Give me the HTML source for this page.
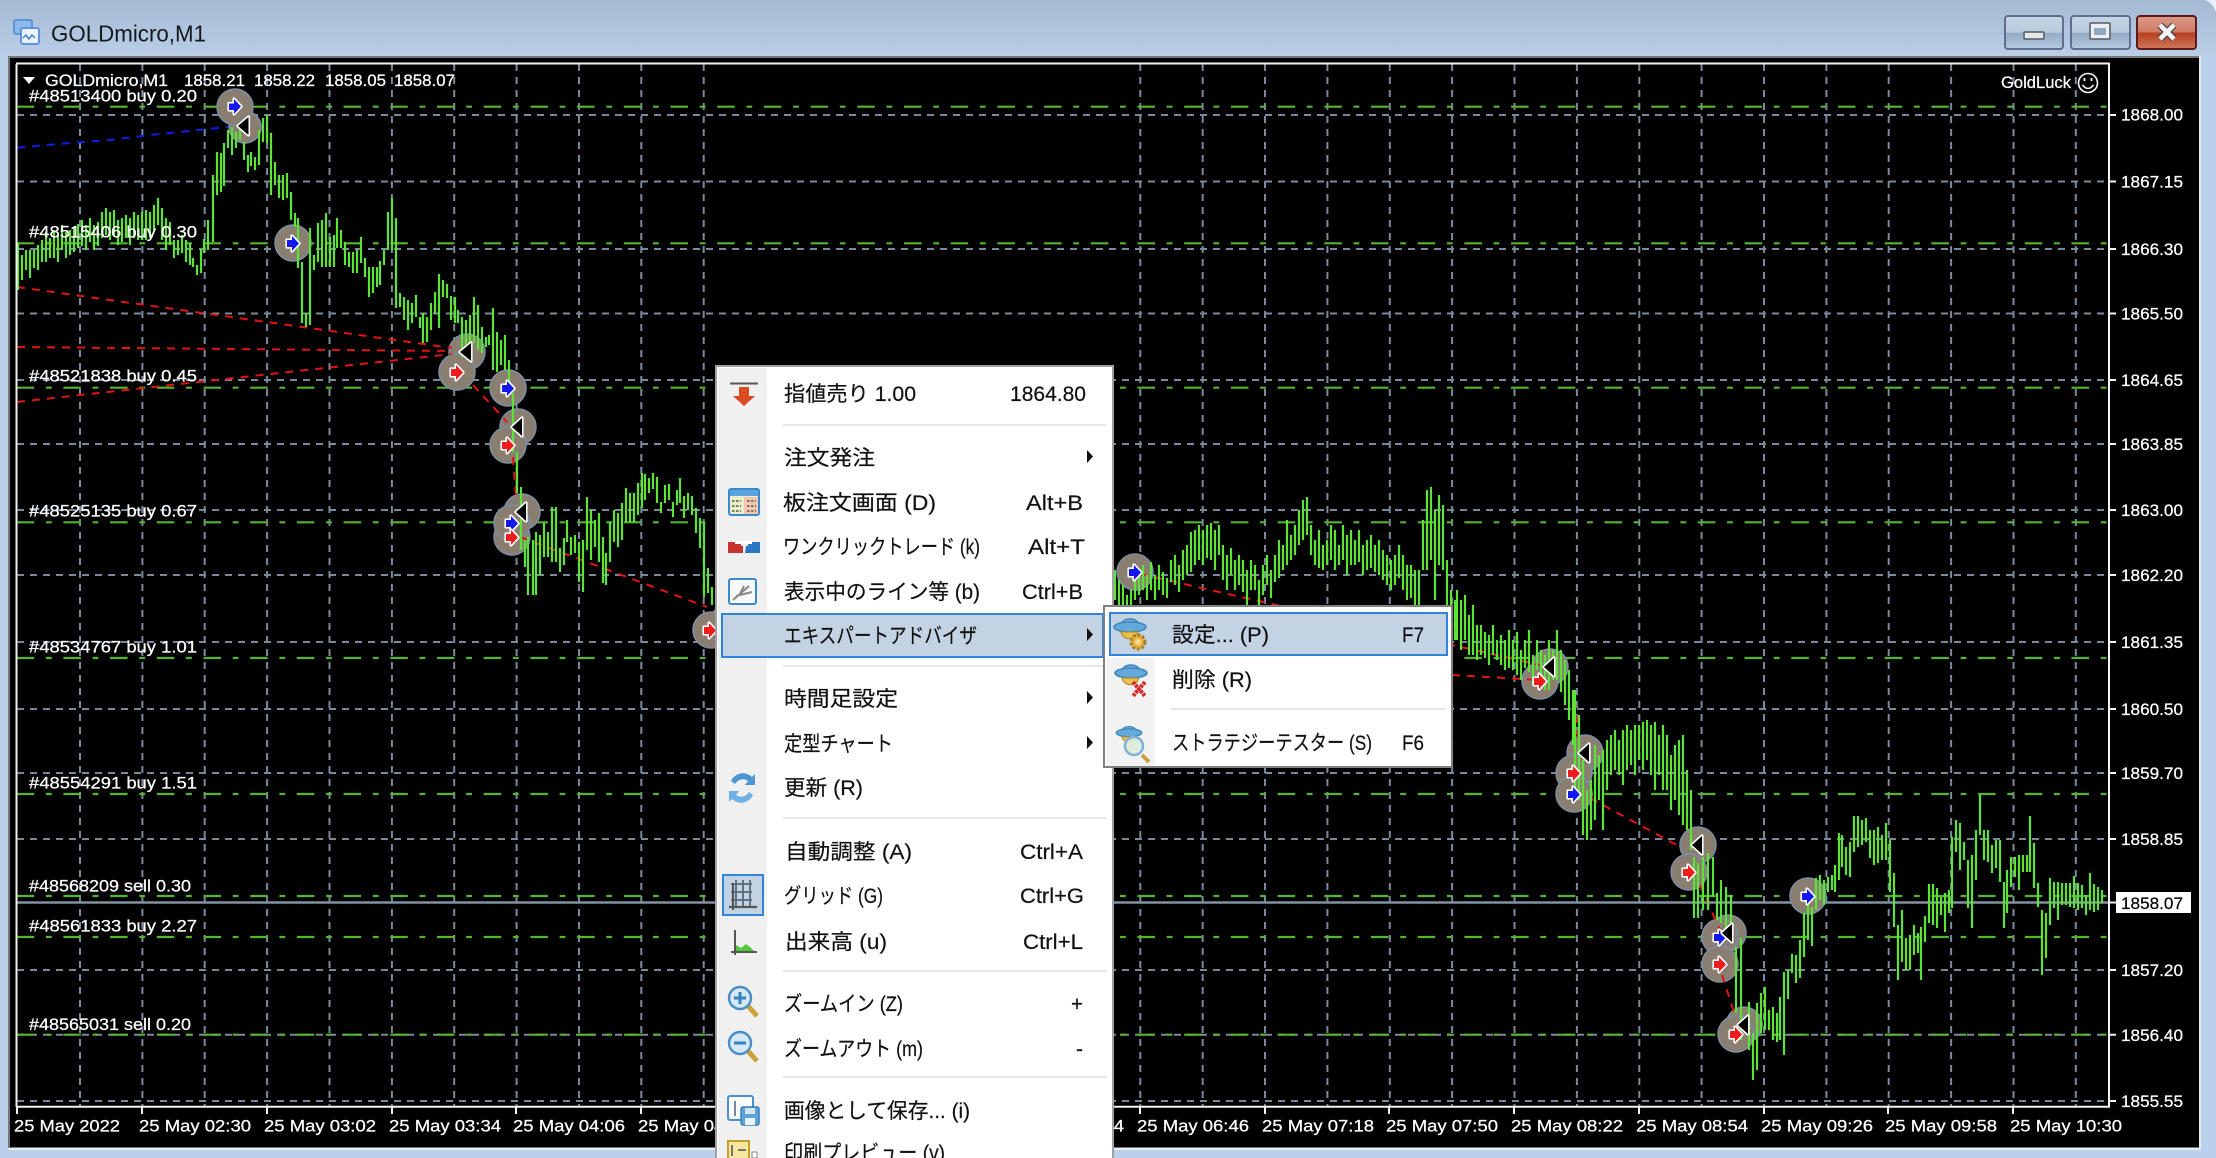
<!DOCTYPE html>
<html lang="ja">
<head>
<meta charset="utf-8">
<title>GOLDmicro,M1</title>
<style>
html,body{margin:0;padding:0;width:2216px;height:1158px;overflow:hidden;background:#b9d1ea}
svg{display:block;filter:blur(.3px)}
text{font-family:"Liberation Sans","Noto Sans CJK JP",sans-serif}
.w{fill:#fff;font-size:17px;stroke:#fff;stroke-width:.25px}
.m{fill:#111;font-size:21px;stroke:#111;stroke-width:.2px}
</style>
</head>
<body>
<svg width="2216" height="1158" viewBox="0 0 2216 1158" xmlns="http://www.w3.org/2000/svg">
<defs>
<linearGradient id="tb" x1="0" y1="0" x2="0" y2="1"><stop offset="0" stop-color="#a6bad2"/><stop offset="1" stop-color="#b9cfe7"/></linearGradient>
<linearGradient id="btn" x1="0" y1="0" x2="0" y2="1"><stop offset="0" stop-color="#c5d5e6"/><stop offset=".5" stop-color="#b8cadd"/><stop offset=".52" stop-color="#93abc5"/><stop offset="1" stop-color="#b5cbe0"/></linearGradient>
<linearGradient id="cls" x1="0" y1="0" x2="0" y2="1"><stop offset="0" stop-color="#dc9a8a"/><stop offset=".48" stop-color="#cf7a66"/><stop offset=".52" stop-color="#b83f22"/><stop offset="1" stop-color="#cf7a5a"/></linearGradient>
<g id="hat"><path d="M-9 -1C-8-9 8-9 9-1Z" fill="#6fb2df" stroke="#3f86bb" stroke-width="1.4"/><ellipse cx="0" cy="1" rx="16" ry="5" fill="#63a9d9" stroke="#3f86bb" stroke-width="1.6"/><path d="M-9 6C-7 15 6 15 8 6Z" fill="#e9c04c" stroke="#a98a2c"/></g>
</defs>

<!-- window chrome -->
<rect width="2216" height="1158" fill="#b9d1ea"/>
<rect width="2216" height="56" fill="url(#tb)"/>
<path d="M2205 0H2216V12Q2212 2 2205 0Z" fill="#e8f0f8"/>
<rect x="14" y="20" width="18" height="14" rx="2" fill="#8db8ec" stroke="#5f95d8" stroke-width="2"/>
<rect x="21" y="28" width="18" height="16" rx="2" fill="#eaf3fd" stroke="#5f95d8" stroke-width="2"/>
<path d="M23 38l3-3 3 4 3-4 3 3" fill="none" stroke="#4a7fc0" stroke-width="1.5"/>
<text x="51" y="41.7" font-size="23" fill="#15181c" textLength="155" lengthAdjust="spacingAndGlyphs">GOLDmicro,M1</text>

<rect x="2005" y="16" width="58" height="33" rx="3" fill="url(#btn)" stroke="#5d6f8c" stroke-width="2"/>
<rect x="2024" y="32" width="20" height="7" rx="1" fill="#e6e6e6" stroke="#4f5a68" stroke-width="1.5"/>
<rect x="2071" y="16" width="59" height="33" rx="3" fill="url(#btn)" stroke="#5d6f8c" stroke-width="2"/>
<rect x="2090" y="23" width="20" height="16" rx="1" fill="#eeeeee" stroke="#4f5a68" stroke-width="1.5"/>
<rect x="2094" y="28" width="12" height="7" fill="#8fa9c4"/>
<rect x="2137" y="16" width="59" height="33" rx="3" fill="url(#cls)" stroke="#5c1a1a" stroke-width="2"/>
<path d="M2160 25L2174 39M2174 25L2160 39" stroke="#4a4a4a" stroke-width="7"/>
<path d="M2160 25L2174 39M2174 25L2160 39" stroke="#f4f4f4" stroke-width="4.5"/>

<!-- chart frame -->
<rect x="8" y="56" width="2193" height="94" fill="#6a6a6a"/>
<rect x="8" y="56" width="2193" height="1094" fill="#e8ecef"/>
<rect x="8" y="56" width="2191" height="1092" fill="#777"/>
<rect x="10" y="58" width="2189" height="1089" fill="#000"/>

<!-- grid -->
<path fill="none" stroke="#7a8a9c" stroke-width="2" stroke-dasharray="7 6" d="M17 115H2109M17 181.5H2109M17 249H2109M17 313.5H2109M17 380H2109M17 444H2109M17 510H2109M17 575H2109M17 642H2109M17 709H2109M17 773H2109M17 839H2109M17 970H2109M17 1034.7H2109M17 1101H2109"/>
<path fill="none" stroke="#7a8a9c" stroke-width="2" stroke-dasharray="7 6" d="M80 64V1106M142.4 64V1106M204.7 64V1106M267.1 64V1106M329.5 64V1106M391.9 64V1106M454.2 64V1106M516.6 64V1106M579 64V1106M641.3 64V1106M703.7 64V1106M1140.3 64V1106M1202.7 64V1106M1265 64V1106M1327.4 64V1106M1389.8 64V1106M1452.1 64V1106M1514.5 64V1106M1576.9 64V1106M1639.3 64V1106M1701.6 64V1106M1764 64V1106M1826.4 64V1106M1888.7 64V1106M1951.1 64V1106M2013.5 64V1106M2075.8 64V1106"/>
<!-- order lines -->
<path fill="none" stroke="#55b62e" stroke-width="2.2" stroke-dasharray="17.5 11.7 5.8 11.7" d="M16.7 106.7H2109M16.7 243.3H2109M16.7 387.7H2109M16.7 522.3H2109M16.7 658H2109M16.7 794H2109M16.7 896H2109M16.7 937H2109M16.7 1034.7H2109"/>
<!-- bid -->
<path d="M17 902.5H2109" stroke="#8291a2" stroke-width="2.4"/>

<!-- marker discs -->
<g fill="#8a7e70" stroke="#7a8fa6" stroke-width="1.5">
<circle cx="245" cy="127" r="16"/><circle cx="235" cy="107" r="18"/><circle cx="293" cy="243" r="18"/>
<circle cx="467" cy="352" r="18"/><circle cx="457" cy="372" r="18"/><circle cx="508" cy="388" r="18"/>
<circle cx="518" cy="427" r="18"/><circle cx="508" cy="445" r="18"/><circle cx="522" cy="512" r="18"/><circle cx="512" cy="537" r="18"/><circle cx="512" cy="523" r="18"/>
<circle cx="730" cy="620" r="18"/><circle cx="711" cy="630" r="18"/>
<circle cx="1135" cy="572" r="18"/><circle cx="1550" cy="667" r="18"/><circle cx="1540" cy="681" r="18"/>
<circle cx="1585" cy="753" r="18"/><circle cx="1574" cy="773" r="18"/><circle cx="1574" cy="794" r="18"/>
<circle cx="1698" cy="845" r="18"/><circle cx="1689" cy="872" r="18"/><circle cx="1808" cy="896" r="18"/>
<circle cx="1728" cy="933" r="18"/><circle cx="1720" cy="937" r="18"/><circle cx="1720" cy="964" r="18"/>
<circle cx="1744" cy="1025" r="18"/><circle cx="1736" cy="1034" r="18"/>
</g>

<!-- trade lines -->
<path fill="none" stroke="#0a20e6" stroke-width="2" stroke-dasharray="8 7" d="M17 147.7L70 143L110 140L150 135L228 127"/>
<path fill="none" stroke="#e01414" stroke-width="2" stroke-dasharray="8 7" d="M17 287L452 348M17 347L452 351M17 402L452 354M473 385L507 422M513 457L516 497M520 537L707 607M1140 574L1540 665M1452 675L1540 680M1575 700L1578 740M1590 798L1682 848M1700 885L1720 930M1722 975L1735 1015"/>

<!-- price bars -->
<path fill="none" stroke="#5de238" stroke-width="2.2" d="M18 243V290M22 255V280M26 250V270M30 250V278M34 250V268M38 245V270M42 240V262M46 232V262M50 238V258M54 230V258M58 235V262M62 225V250M66 232V258M70 230V255M74 228V252M78 224V248M82 220V246M86 225V250M90 218V242M94 225V250M98 222V246M102 212V238M106 208V235M110 212V240M114 210V236M118 220V245M122 218V242M126 215V238M130 218V245M134 212V238M138 215V240M142 212V240M146 210V240M150 212V238M154 205V230M158 198V225M162 208V240M166 218V250M170 222V245M174 240V258M178 240V255M182 235V253M186 240V262M190 243V265M193 258V267M197 265V275M201 249V273M204 239V253
M208 220V250M213 175V242M217 152V195M221 153V192M224 143V186M228 130V148M232 127V155M236 132V148M240 128V140M244 142V160M248 155V172M251 152V166M255 157V170M259 130V165M263 118V142M267 115V143M271 133V195M275 162V185M279 175V198M283 175V200M287 173V198M291 192V220M295 213V227M298 218V268M302 262V323M306 313V327M310 228V325M314 255V270M318 223V262M322 220V267M326 213V267M330 237V267M334 235V267M337 218V248M341 230V248M345 242V265M349 252V267M353 252V273M357 250V273M361 237V263M365 258V277M369 267V297M373 267V293M377 267V287M380 261V285M384 250V265M388 212V250M392 198V250M396 218V308M400 293V307M404 297V320M408 300V330M412 303V323M416 295V317M420 317V328M423 313V343M427 317V342M431 303V330M435 292V313M439 274V328M443 280V297M447 284V298M451 296V320M455 297V323M458 310V323M462 317V357M466 320V347M470 315V362M474 297V343M478 305V350M482 327V353M486 337V347M489 335V345M493 308V370M497 332V372M501 340V365M505 335V370M509 360V387
M513 393V452M517 452V493M521 487V550M525 540V567M528 537V595M533 540V595M536 532V595M540 535V575M544 523V557M548 532V557M552 507V562M556 507V562M560 548V572M564 538V565M567 520V542M571 537V555M575 535V553M579 542V582M583 540V592M587 497V550M591 510V560M595 520V547M599 513V562M603 537V583M606 553V585M610 522V562M614 510V542M618 513V547M622 503V540M626 488V522M630 493V522M634 493V522M638 483V515M642 473V508M645 474V500M649 478V493M653 473V489M657 477V503M661 502V513M665 485V503M669 484V500M673 502V517M677 490V505M680 478V503M684 496V518M688 493V510M692 496V515M696 508V533M700 518V548M704 523V597M708 568V593M712 587V605
M1115 570V600M1119 580V612M1123 585V620M1127 595V615M1131 590V612M1135 575V600M1139 570V595M1143 565V590M1147 575V600M1151 562V590M1155 575V600M1159 565V590M1163 572V595M1167 578V598M1171 560V582M1175 555V585M1179 565V592M1183 550V580M1187 545V575M1191 532V572M1195 530V565M1199 525V560M1203 530V565M1207 525V558M1211 523V560M1215 530V570M1219 525V555M1223 545V580M1227 555V590M1231 548V575M1235 560V590M1239 555V585M1243 560V592M1247 570V605M1251 560V590M1255 565V590M1259 580V605M1263 565V595M1267 555V585M1271 570V598M1275 555V582M1279 540V578M1283 545V570M1287 520V565M1291 535V560M1295 525V555M1299 510V545M1303 500V540M1307 497V535M1311 525V555M1315 540V565M1319 530V568M1323 545V570M1327 540V565M1331 525V560M1335 530V570M1339 545V565M1343 525V560M1347 535V575M1351 530V565M1355 540V565M1359 530V562M1363 545V575M1367 540V570M1371 535V568M1375 545V572M1379 540V575M1383 550V580M1387 555V585M1391 560V590M1395 555V585M1399 545V578M1403 555V590M1407 565V600M1411 565V598M1415 570V605M1419 570V615M1423 520V570M1427 490V570M1431 487V560M1435 510V600M1439 495V565M1443 505V570M1447 560V610M1451 590V640M1455 600V640
M1457 590V640M1461 600V650M1465 595V640M1469 615V655M1473 605V655M1477 625V660M1481 625V655M1485 632V658M1489 635V665M1493 625V655M1497 640V660M1501 635V665M1505 640V670M1509 630V668M1513 640V670M1517 632V675M1521 650V680M1525 640V668M1529 630V672M1533 655V685M1537 640V670M1541 650V680M1545 655V690M1549 640V690M1553 650V680M1557 630V680M1561 650V692M1565 660V705M1569 670V720M1573 690V745M1575 690V790M1579 715V800M1583 760V835M1587 790V840M1591 780V830M1595 745V820M1599 755V800M1603 750V830M1607 740V790M1611 735V775M1615 730V770M1619 740V775M1623 730V785M1627 725V770M1631 730V765M1635 725V775M1639 725V760M1643 722V770M1647 720V760M1651 725V775M1655 722V790M1659 735V775M1663 725V790M1667 735V790M1671 755V810M1675 745V800M1679 740V815M1683 735V825M1687 770V830M1691 790V850
M1694 857V918M1698 863V918M1703 857V910M1708 853V910M1713 857V897M1717 893V920M1721 880V923M1726 887V933M1731 895V943M1736 947V1013M1741 938V1040M1749 1002V1050M1753 1033V1080M1757 1003V1070M1761 993V1033M1765 987V1030M1769 1010V1030M1773 1007V1040M1777 1013V1042M1780 997V1040M1784 972V1055M1788 970V999M1792 954V973M1796 955V983M1800 940V978M1804 913V957M1808 900V940M1812 907V946M1816 878V910M1820 875V900M1824 880V905M1828 877V892M1832 875V890M1835 865V892M1839 833V880M1842 835V867M1846 847V875M1850 842V877M1854 816V852M1858 816V847M1862 820V845M1866 818V842M1870 830V858M1874 830V865M1878 827V863M1882 835V860M1886 823V860M1890 840V892M1894 873V927M1898 925V980M1902 910V962M1906 938V970M1910 935V970M1914 925V955M1918 933V953M1921 927V980M1925 916V942M1929 884V923M1933 884V925M1937 888V928M1941 897V915M1945 893V932M1949 890V913M1952 837V908M1956 820V852M1960 823V870M1964 842V860M1968 860V908M1972 855V928M1976 830V880M1980 795V835M1984 830V860M1988 830V862M1992 845V873M1996 840V868M2000 840V882M2004 882V928M2007 870V913M2011 857V887M2015 857V877M2019 855V890M2023 855V872M2027 855V872M2030 816V872M2034 843V888M2038 883V907M2042 910V975M2046 913V958M2050 878V925M2054 882V908M2058 882V920M2062 883V905M2066 883V905M2070 883V907M2074 876V908M2078 883V910M2082 885V908M2086 895V915M2090 873V910M2094 884V912M2098 887V910M2102 890V903"/>

<!-- arrows -->
<g stroke="#fff" stroke-width="3.2" stroke-linejoin="round" paint-order="stroke">
<g fill="#1418f0"><path d="M229 103.5H234V99L241 106.5L234 114V110H229Z"/>
<path d="M287 240H292V236L299 243.5L292 251V247H287Z"/><path d="M502 385H507V381L514 388.5L507 396V392H502Z"/><path d="M506 520H511V516L518 523.5L511 531V527H506Z"/><path d="M1129 569H1134V565L1141 572.5L1134 580V576H1129Z"/><path d="M1568 791H1573V787L1580 794.5L1573 802V798H1568Z"/><path d="M1802 893H1807V889L1814 896.5L1807 904V900H1802Z"/><path d="M1714 934H1719V930L1726 937.5L1719 945V941H1714Z"/></g>
<g fill="#ee1c1c"><path d="M451 369H456V365L463 372.5L456 380V376H451Z"/><path d="M502 442H507V438L514 445.5L507 453V449H502Z"/><path d="M506 534H511V530L518 537.5L511 545V541H506Z"/><path d="M704 627H709V623L716 630.5L709 638V634H704Z"/><path d="M1534 678H1539V674L1546 681.5L1539 689V685H1534Z"/><path d="M1568 770H1573V766L1580 773.5L1573 781V777H1568Z"/><path d="M1683 869H1688V865L1695 872.5L1688 880V876H1683Z"/><path d="M1714 961H1719V957L1726 964.5L1719 972V968H1714Z"/><path d="M1730 1031H1735V1027L1742 1034.5L1735 1042V1038H1730Z"/></g>
<g fill="#000"><path d="M238 126L248.5 117V135Z"/><path d="M460 352L471 343V361Z"/><path d="M512 427L522 418V436Z"/><path d="M516 512L526 503V521Z"/><path d="M1544 667L1554 658V676Z"/><path d="M1579 753L1589 744V762Z"/><path d="M1692 845L1702 836V854Z"/><path d="M1722 933L1732 924V942Z"/><path d="M1738 1025L1748 1016V1034Z"/></g>
</g>

<!-- axes -->
<path fill="none" stroke="#f2f2f2" stroke-width="2" d="M16.5 64V1107M16 63.5H2109.5M2109 63V1107M16 1106.7H2110"/>
<path fill="none" stroke="#f2f2f2" stroke-width="2" d="M2109 115h7M2109 181.5h7M2109 249h7M2109 313.5h7M2109 380h7M2109 444h7M2109 510h7M2109 575h7M2109 642h7M2109 709h7M2109 773h7M2109 839h7M2109 902.5h7M2109 970h7M2109 1034.7h7M2109 1101h7M17 1107v7M142 1107v7M267 1107v7M392 1107v7M516 1107v7M641 1107v7M1140 1107v7M1265 1107v7M1389 1107v7M1514 1107v7M1639 1107v7M1764 1107v7M1888 1107v7M2013 1107v7"/>

<!-- chart text -->
<path d="M23 77H35L29 84Z" fill="#fff"/>
<g>
<text class="w" x="45" y="86" textLength="123" lengthAdjust="spacingAndGlyphs">GOLDmicro,M1</text>
<text class="w" x="184" y="86" textLength="61" lengthAdjust="spacingAndGlyphs">1858.21</text>
<text class="w" x="254" y="86" textLength="61" lengthAdjust="spacingAndGlyphs">1858.22</text>
<text class="w" x="325" y="86" textLength="61" lengthAdjust="spacingAndGlyphs">1858.05</text>
<text class="w" x="394" y="86" textLength="61" lengthAdjust="spacingAndGlyphs">1858.07</text>
<text class="w" x="2001" y="88" textLength="70" lengthAdjust="spacingAndGlyphs">GoldLuck</text>
<text class="w" x="29" y="101.7" textLength="168" lengthAdjust="spacingAndGlyphs">#48513400 buy 0.20</text>
<text class="w" x="29" y="237.7" textLength="168" lengthAdjust="spacingAndGlyphs">#48515406 buy 0.30</text>
<text class="w" x="29" y="381.7" textLength="168" lengthAdjust="spacingAndGlyphs">#48521838 buy 0.45</text>
<text class="w" x="29" y="516.5" textLength="168" lengthAdjust="spacingAndGlyphs">#48525135 buy 0.67</text>
<text class="w" x="29" y="652.5" textLength="168" lengthAdjust="spacingAndGlyphs">#48534767 buy 1.01</text>
<text class="w" x="29" y="788.5" textLength="168" lengthAdjust="spacingAndGlyphs">#48554291 buy 1.51</text>
<text class="w" x="29" y="891.7" textLength="162" lengthAdjust="spacingAndGlyphs">#48568209 sell 0.30</text>
<text class="w" x="29" y="931.7" textLength="168" lengthAdjust="spacingAndGlyphs">#48561833 buy 2.27</text>
<text class="w" x="29" y="1030" textLength="162" lengthAdjust="spacingAndGlyphs">#48565031 sell 0.20</text>
<text class="w" x="2121" y="120.5" textLength="62" lengthAdjust="spacingAndGlyphs">1868.00</text>
<text class="w" x="2121" y="187.5" textLength="62" lengthAdjust="spacingAndGlyphs">1867.15</text>
<text class="w" x="2121" y="255" textLength="62" lengthAdjust="spacingAndGlyphs">1866.30</text>
<text class="w" x="2121" y="319.5" textLength="62" lengthAdjust="spacingAndGlyphs">1865.50</text>
<text class="w" x="2121" y="386" textLength="62" lengthAdjust="spacingAndGlyphs">1864.65</text>
<text class="w" x="2121" y="450" textLength="62" lengthAdjust="spacingAndGlyphs">1863.85</text>
<text class="w" x="2121" y="516" textLength="62" lengthAdjust="spacingAndGlyphs">1863.00</text>
<text class="w" x="2121" y="581" textLength="62" lengthAdjust="spacingAndGlyphs">1862.20</text>
<text class="w" x="2121" y="648" textLength="62" lengthAdjust="spacingAndGlyphs">1861.35</text>
<text class="w" x="2121" y="715" textLength="62" lengthAdjust="spacingAndGlyphs">1860.50</text>
<text class="w" x="2121" y="779" textLength="62" lengthAdjust="spacingAndGlyphs">1859.70</text>
<text class="w" x="2121" y="845" textLength="62" lengthAdjust="spacingAndGlyphs">1858.85</text>
<text class="w" x="2121" y="976" textLength="62" lengthAdjust="spacingAndGlyphs">1857.20</text>
<text class="w" x="2121" y="1041" textLength="62" lengthAdjust="spacingAndGlyphs">1856.40</text>
<text class="w" x="2121" y="1107" textLength="62" lengthAdjust="spacingAndGlyphs">1855.55</text>
<text class="w" x="14" y="1131.7" textLength="106" lengthAdjust="spacingAndGlyphs">25 May 2022</text>
<text class="w" x="139" y="1131.7" textLength="112" lengthAdjust="spacingAndGlyphs">25 May 02:30</text>
<text class="w" x="264" y="1131.7" textLength="112" lengthAdjust="spacingAndGlyphs">25 May 03:02</text>
<text class="w" x="389" y="1131.7" textLength="112" lengthAdjust="spacingAndGlyphs">25 May 03:34</text>
<text class="w" x="513" y="1131.7" textLength="112" lengthAdjust="spacingAndGlyphs">25 May 04:06</text>
<text class="w" x="638" y="1131.7" textLength="112" lengthAdjust="spacingAndGlyphs">25 May 04:38</text>
<text class="w" x="1012" y="1131.7" textLength="112" lengthAdjust="spacingAndGlyphs">25 May 06:14</text>
<text class="w" x="1137" y="1131.7" textLength="112" lengthAdjust="spacingAndGlyphs">25 May 06:46</text>
<text class="w" x="1262" y="1131.7" textLength="112" lengthAdjust="spacingAndGlyphs">25 May 07:18</text>
<text class="w" x="1386" y="1131.7" textLength="112" lengthAdjust="spacingAndGlyphs">25 May 07:50</text>
<text class="w" x="1511" y="1131.7" textLength="112" lengthAdjust="spacingAndGlyphs">25 May 08:22</text>
<text class="w" x="1636" y="1131.7" textLength="112" lengthAdjust="spacingAndGlyphs">25 May 08:54</text>
<text class="w" x="1761" y="1131.7" textLength="112" lengthAdjust="spacingAndGlyphs">25 May 09:26</text>
<text class="w" x="1885" y="1131.7" textLength="112" lengthAdjust="spacingAndGlyphs">25 May 09:58</text>
<text class="w" x="2010" y="1131.7" textLength="112" lengthAdjust="spacingAndGlyphs">25 May 10:30</text>
</g>
<!-- smiley -->
<circle cx="2088" cy="83" r="9.5" fill="none" stroke="#fff" stroke-width="1.6"/>
<path d="M2082.5 85Q2088 92 2093.5 85" fill="none" stroke="#fff" stroke-width="1.5"/>
<path d="M2084.5 78v3M2091.5 78v3" stroke="#fff" stroke-width="1.8"/>
<!-- bid tag -->
<rect x="2116" y="892" width="75" height="21" fill="#fff"/>
<text x="2121" y="909" font-size="17" fill="#000" stroke="#000" stroke-width=".2" textLength="62" lengthAdjust="spacingAndGlyphs">1858.07</text>

<!-- context menu -->
<rect x="716" y="366" width="397" height="800" fill="#fff" stroke="#a0a0a0" stroke-width="2"/>
<rect x="718" y="368" width="49" height="790" fill="#f0f0f0"/>
<path d="M783 425H1106M783 666H1106M783 818H1106M783 971H1106M783 1077H1106" stroke="#e6e6e6" stroke-width="2"/>
<rect x="722" y="614" width="381" height="43" fill="#c3d3e4" stroke="#2f84dc" stroke-width="2"/>
<rect x="723" y="875" width="40" height="40" fill="#c3d3e4" stroke="#2f84dc" stroke-width="2"/>

<g>
<text class="m" x="784" y="401" textLength="132" lengthAdjust="spacingAndGlyphs">指値売り 1.00</text>
<text class="m" x="1010" y="401" textLength="76" lengthAdjust="spacingAndGlyphs">1864.80</text>
<text class="m" x="784" y="465" textLength="91" lengthAdjust="spacingAndGlyphs">注文発注</text>
<text class="m" x="783" y="510" textLength="153" lengthAdjust="spacingAndGlyphs">板注文画面 (D)</text>
<text class="m" x="1026" y="510" textLength="57" lengthAdjust="spacingAndGlyphs">Alt+B</text>
<text class="m" x="783" y="554" textLength="197" lengthAdjust="spacingAndGlyphs">ワンクリックトレード (k)</text>
<text class="m" x="1028" y="554" textLength="57" lengthAdjust="spacingAndGlyphs">Alt+T</text>
<text class="m" x="784" y="599" textLength="196" lengthAdjust="spacingAndGlyphs">表示中のライン等 (b)</text>
<text class="m" x="1022" y="599" textLength="61" lengthAdjust="spacingAndGlyphs">Ctrl+B</text>
<text class="m" x="784" y="643" textLength="193" lengthAdjust="spacingAndGlyphs">エキスパートアドバイザ</text>
<text class="m" x="784" y="706" textLength="114" lengthAdjust="spacingAndGlyphs">時間足設定</text>
<text class="m" x="784" y="751" textLength="109" lengthAdjust="spacingAndGlyphs">定型チャート</text>
<text class="m" x="784" y="795" textLength="79" lengthAdjust="spacingAndGlyphs">更新 (R)</text>
<text class="m" x="785" y="859" textLength="127" lengthAdjust="spacingAndGlyphs">自動調整 (A)</text>
<text class="m" x="1020" y="859" textLength="63" lengthAdjust="spacingAndGlyphs">Ctrl+A</text>
<text class="m" x="784" y="903" textLength="99" lengthAdjust="spacingAndGlyphs">グリッド (G)</text>
<text class="m" x="1020" y="903" textLength="64" lengthAdjust="spacingAndGlyphs">Ctrl+G</text>
<text class="m" x="785" y="949" textLength="102" lengthAdjust="spacingAndGlyphs">出来高 (u)</text>
<text class="m" x="1023" y="949" textLength="60" lengthAdjust="spacingAndGlyphs">Ctrl+L</text>
<text class="m" x="784" y="1011" textLength="119" lengthAdjust="spacingAndGlyphs">ズームイン (Z)</text>
<text class="m" x="1071" y="1011" textLength="12" lengthAdjust="spacingAndGlyphs">+</text>
<text class="m" x="784" y="1056" textLength="139" lengthAdjust="spacingAndGlyphs">ズームアウト (m)</text>
<text class="m" x="1076" y="1056" textLength="7" lengthAdjust="spacingAndGlyphs">-</text>
<text class="m" x="784" y="1118" textLength="186" lengthAdjust="spacingAndGlyphs">画像として保存... (i)</text>
<text class="m" x="784" y="1160" textLength="161" lengthAdjust="spacingAndGlyphs">印刷プレビュー (v)</text>
</g>
<path d="M1087 450l6 6.5-6 6.5ZM1087 628l6 6.5-6 6.5ZM1087 691l6 6.5-6 6.5ZM1087 736l6 6.5-6 6.5Z" fill="#111"/>

<!-- menu icons -->
<path d="M730 383.5H758" stroke="#555" stroke-width="2"/>
<path d="M739 387H749V396H755L744 406L733 396H739Z" fill="#dc4a22"/>
<rect x="729" y="489" width="30" height="26" rx="2" fill="#e8f0c8" stroke="#3c88cc" stroke-width="2"/>
<rect x="730" y="490" width="28" height="6" fill="#5aa4e0"/>
<rect x="744" y="497" width="14" height="17" fill="#f4c6b0"/>
<path d="M732 501h9M732 506h9M732 511h9M747 501h9M747 506h9M747 511h9" stroke="#555" stroke-width="1.6" stroke-dasharray="2.5 1.5"/>
<path d="M728 542H741V546H743V553H728Z" fill="#c8342e"/><path d="M746 546H748V542H760V553H745Z" fill="#2a78c0"/><path d="M735 541H752V544H735Z" fill="#fff"/>
<rect x="729" y="579" width="27" height="25" rx="2" fill="#f8f8f8" stroke="#3c88cc" stroke-width="2"/>
<path d="M733 600L749 586M736 596L752 592M740 594L744 586" stroke="#888" stroke-width="2" fill="none"/>
<path d="M731 781A13 13 0 0 1 752 777L755 774V785H745L748 781A9 9 0 0 0 735 784Z" fill="#4d95d4"/>
<path d="M753 795A13 13 0 0 1 732 799L729 802V791H739L736 795A9 9 0 0 0 749 792Z" fill="#6db1e6"/>
<path d="M731 884H752M731 892H752M731 900H752M736 880V906M743 880V906M750 880V906" stroke="#5a6a7a" stroke-width="1.8"/>
<path d="M733 883V910M729 907H757" stroke="#555" stroke-width="2.2"/>
<path d="M736 951V945L741 948L746 944L751 948L754 951Z" fill="#4ec83a"/>
<path d="M735 930V955M731 952H757" stroke="#555" stroke-width="2"/>
<path d="M748 1006L757 1016" stroke="#c9a23a" stroke-width="5"/>
<circle cx="740" cy="998" r="11" fill="#d4e8f8" stroke="#4a8cc4" stroke-width="2.4"/>
<path d="M734 998H746M740 992V1004" stroke="#3a80bc" stroke-width="3"/>
<path d="M748 1051L757 1061" stroke="#c9a23a" stroke-width="5"/>
<circle cx="740" cy="1043" r="11" fill="#d4e8f8" stroke="#4a8cc4" stroke-width="2.4"/>
<path d="M734 1043H746" stroke="#3a80bc" stroke-width="3"/>
<rect x="728" y="1096" width="25" height="24" rx="2" fill="#fafcff" stroke="#4a90d0" stroke-width="2"/>
<path d="M735 1101V1116" stroke="#7a8a9a" stroke-width="2"/>
<rect x="741" y="1107" width="18" height="18" rx="2" fill="#5ea4dc" stroke="#3a80c0" stroke-width="1.5"/>
<rect x="745" y="1108" width="10" height="6" fill="#d8e4ee"/><rect x="745" y="1118" width="10" height="7" fill="#eef3f8"/>
<rect x="728" y="1141" width="21" height="20" fill="#f6e6a0" stroke="#c2a028" stroke-width="2"/>
<path d="M732 1145V1156M738 1150H746" stroke="#666" stroke-width="1.8"/>
<path d="M752 1152h5v6h-5z" fill="#fff" stroke="#888"/>

<!-- submenu -->
<rect x="1104" y="606" width="348" height="161" fill="#fff" stroke="#808080" stroke-width="2"/>
<rect x="1106" y="658" width="49" height="108" fill="#f2f2f2"/>
<rect x="1110" y="613" width="337" height="42" fill="#c3d3e4" stroke="#2f84dc" stroke-width="2"/>
<path d="M1171 709H1446" stroke="#e6e6e6" stroke-width="2"/>
<g>
<text class="m" x="1172" y="642" textLength="97" lengthAdjust="spacingAndGlyphs">設定... (P)</text>
<text class="m" x="1402" y="642" textLength="22" lengthAdjust="spacingAndGlyphs">F7</text>
<text class="m" x="1172" y="687" textLength="80" lengthAdjust="spacingAndGlyphs">削除 (R)</text>
<text class="m" x="1172" y="750" textLength="200" lengthAdjust="spacingAndGlyphs">ストラテジーテスター (S)</text>
<text class="m" x="1402" y="750" textLength="22" lengthAdjust="spacingAndGlyphs">F6</text>
</g>
<use href="#hat" x="1130" y="626"/>
<circle cx="1138" cy="642" r="7" fill="#e8b448" stroke="#a87f22" stroke-width="3" stroke-dasharray="3 1.6"/>
<circle cx="1138" cy="642" r="3" fill="#f6dc8c"/>
<use href="#hat" x="1131" y="672"/>
<path d="M1133 682L1145 696M1145 682L1133 696" stroke="#d42a2a" stroke-width="4" stroke-dasharray="3 .8"/>
<g transform="translate(1129 732) scale(.8)"><use href="#hat"/></g>
<path d="M1142 755L1149 762" stroke="#c9a23a" stroke-width="4"/>
<circle cx="1134" cy="746" r="9" fill="#dcebd8" fill-opacity=".9" stroke="#7fb0d8" stroke-width="2.4"/>
</svg>
</body>
</html>
